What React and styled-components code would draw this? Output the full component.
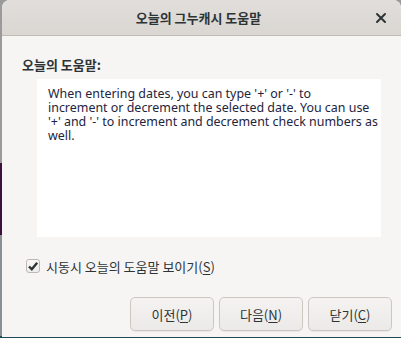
import React from "react";
import styled, { createGlobalStyle } from "styled-components";

const Global = createGlobalStyle`
  html, body {
    margin: 0;
    padding: 0;
    width: 401px;
    height: 338px;
    overflow: hidden;
    background: #1d2a3c;
  }
  body {
    font-family: "Noto Sans", "Noto Sans CJK KR", sans-serif;
  }
`;

const Desktop = styled.div`
  width: 401px;
  height: 338px;
  display: flex;
  background: linear-gradient(
    to bottom,
    #9a9a9a 0,
    #9a9a9a 163px,
    #3d0f3c 163px,
    #3d0f3c 235px,
    #8a8f92 235px,
    #8a8f92 336px,
    #1c4a55 336px
  );
`;

const Dialog = styled.div`
  margin-left: 2px;
  width: 405px;
  height: 337px;
  display: flex;
  flex-direction: column;
  background: #f6f5f4;
  border-radius: 8px 8px 0 0;
  overflow: hidden;
`;

const TitleBar = styled.div`
  height: 35px;
  flex: none;
  display: flex;
  align-items: center;
  justify-content: center;
  position: relative;
  background: linear-gradient(to bottom, #e1dedb, #dad6d2);
  border-bottom: 1px solid #c1bab1;
  font-family: "Noto Sans CJK KR", sans-serif;
  font-weight: 700;
  font-size: 13px;
  color: #2e3436;
  padding-right: 6px;
`;

const CloseButton = styled.div`
  position: absolute;
  right: 14px;
  top: 12px;
  width: 12px;
  height: 12px;
  display: flex;
`;

const Body = styled.div`
  flex: 1;
  display: flex;
  flex-direction: column;
  padding: 22px 0 0 20px;
`;

const Heading = styled.div`
  font-family: "Noto Sans CJK KR", sans-serif;
  font-weight: 700;
  font-size: 13px;
  color: #2e3436;
  line-height: 14px;
`;

const TextBox = styled.div`
  margin: 7px 0 0 15px;
  width: 344px;
  height: 158px;
  box-sizing: border-box;
  background: #ffffff;
  padding: 8px 4px 0 11px;
  font-family: "Noto Sans", sans-serif;
  font-size: 12.45px;
  line-height: 14px;
  color: #1e2440;
  white-space: nowrap;
`;

const CheckRow = styled.label`
  display: flex;
  align-items: center;
  gap: 6px;
  margin: 20px 0 0 4px;
  font-family: "Noto Sans CJK KR", sans-serif;
  font-size: 13px;
  color: #2e3436;
`;

const CheckBox = styled.span`
  width: 14px;
  height: 14px;
  margin-top: -2px;
  box-sizing: border-box;
  border: 1px solid #bfb8b1;
  border-radius: 3px;
  background: linear-gradient(to bottom, #f8f8f7, #eeedec);
  display: flex;
  align-items: center;
  justify-content: center;
`;

const ButtonRow = styled.div`
  display: flex;
  gap: 5px;
  margin: 21px 0 0 108px;
`;

const Button = styled.div`
  width: 84px;
  height: 34px;
  box-sizing: border-box;
  border: 1px solid #cdc7c2;
  border-radius: 5px;
  background: linear-gradient(to bottom, #f4f3f2, #eceae8);
  box-shadow: 0 1px 1px rgba(0, 0, 0, 0.06);
  display: flex;
  align-items: center;
  justify-content: center;
  font-family: "Noto Sans CJK KR", sans-serif;
  font-size: 13px;
  color: #2e3436;
`;

const Key = styled.span`
  text-decoration: underline;
  text-underline-offset: 2px;
`;

function Label({ text, mnemonic }) {
  return (
    <>
      {text}(<Key>{mnemonic}</Key>)
    </>
  );
}

export default function App() {
  return (
    <>
      <Global />
      <Desktop>
        <Dialog>
          <TitleBar>
            오늘의 그누캐시 도움말
            <CloseButton>
              <svg width="12" height="12" viewBox="0 0 12 12">
                <path
                  d="M2 2 L10 10 M10 2 L2 10"
                  stroke="#2e3436"
                  strokeWidth="2"
                  strokeLinecap="round"
                />
              </svg>
            </CloseButton>
          </TitleBar>
          <Body>
            <Heading>오늘의 도움말:</Heading>
            <TextBox>
              When entering dates, you can type '+' or '-' to
              <br />
              increment or decrement the selected date. You can use
              <br />
              '+' and '-' to increment and decrement check numbers as
              <br />
              well.
            </TextBox>
            <CheckRow>
              <CheckBox>
                <svg width="12" height="12" viewBox="0 0 12 12">
                  <path
                    d="M2 6.5 L4.8 9.2 L10.2 2.8"
                    fill="none"
                    stroke="#2e3436"
                    strokeWidth="2.4"
                  />
                </svg>
              </CheckBox>
              <span>
                시동시 오늘의 도움말 보이기<Label text="" mnemonic="S" />
              </span>
            </CheckRow>
            <ButtonRow>
              <Button>
                <Label text="이전" mnemonic="P" />
              </Button>
              <Button>
                <Label text="다음" mnemonic="N" />
              </Button>
              <Button>
                <Label text="닫기" mnemonic="C" />
              </Button>
            </ButtonRow>
          </Body>
        </Dialog>
      </Desktop>
    </>
  );
}
